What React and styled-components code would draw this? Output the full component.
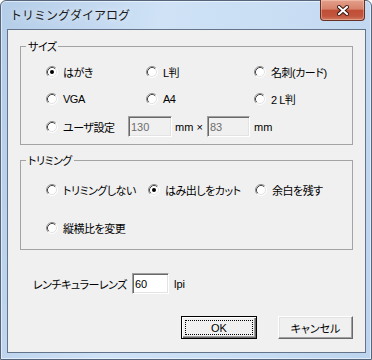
import React from "react";
import styled, { createGlobalStyle } from "styled-components";

const GlobalStyle = createGlobalStyle`
  html, body {
    margin: 0;
    padding: 0;
    background: #ffffff;
  }
  body {
    width: 372px;
    height: 360px;
    overflow: hidden;
    font-family: "Liberation Sans", "Noto Sans CJK JP", sans-serif;
    font-size: 11px;
    color: #000;
  }
`;

const Window = styled.div`
  box-sizing: border-box;
  width: 372px;
  height: 360px;
  display: flex;
  flex-direction: column;
  padding: 0 5px 6px 6px;
  border: 1px solid #55667c;
  border-radius: 6px 6px 0 0;
  background: linear-gradient(100deg, #b4cde8 0%, #cfe2f6 38%, #c8ddf3 70%, #bcd4ee 100%);
  box-shadow: inset 0 0 0 1px rgba(255, 255, 255, 0.55);
`;

const TitleBar = styled.div`
  height: 28px;
  display: flex;
  justify-content: space-between;
  align-items: flex-start;
  flex-shrink: 0;
`;

const Title = styled.div`
  margin: 6px 0 0 3px;
  line-height: 16px;
  font-family: "Noto Sans CJK JP", sans-serif;
  font-size: 12px;
  color: #1a1a1a;
  text-shadow: 0 0 6px rgba(255, 255, 255, 0.9);
`;

const CloseButton = styled.div`
  box-sizing: border-box;
  width: 45px;
  height: 21px;
  margin: -1px 1px 0 0;
  display: flex;
  align-items: center;
  justify-content: center;
  border: 1px solid #6a2f24;
  border-top: none;
  border-radius: 0 0 4px 4px;
  background: linear-gradient(#e3a08b 0%, #d7826b 45%, #c04e37 52%, #c3553d 80%, #d07a62 100%);
  box-shadow: inset 0 0 0 1px rgba(255, 220, 200, 0.4);
`;

const Client = styled.div`
  flex: 1;
  display: flex;
  flex-direction: column;
  background: #f0f0f0;
  border: 1px solid #62738a;
`;

const Group = styled.fieldset`
  margin: ${(p) => p.$top}px 12px 0 12px;
  padding: ${(p) => p.$padTop}px 0 ${(p) => p.$padBottom}px 0;
  border: 1px solid #a3a3a3;
  min-width: 0;
`;

const Legend = styled.legend`
  margin-left: 5px;
  padding: 0 2px;
  line-height: 15px;
  font-family: "Noto Sans CJK JP", sans-serif;
  font-size: 11px;
  font-feature-settings: "palt";
  letter-spacing: -0.5px;
`;

const Options = styled.div`
  display: grid;
  grid-template-columns: ${(p) => p.$cols};
  grid-auto-rows: 20px;
  row-gap: ${(p) => p.$gap}px;
  padding-left: 25px;
`;

const Option = styled.label`
  display: flex;
  align-items: center;
  gap: 5px;
  height: 20px;
  white-space: nowrap;
  flex-shrink: 0;
  width: ${(p) => (p.$width ? `${p.$width}px` : "auto")};
  font-feature-settings: "palt";
  letter-spacing: -0.5px;
`;

const CustomRow = styled.div`
  grid-column: 1 / -1;
  display: flex;
  align-items: center;
  height: 21px;
`;

const Field = styled.input`
  box-sizing: border-box;
  width: ${(p) => p.$width}px;
  height: 21px;
  margin: 0;
  padding: 0 2px;
  font-family: "Liberation Sans", sans-serif;
  font-size: 11px;
  color: ${(p) => (p.$muted ? "#6d6d6d" : "#000")};
  background: ${(p) => (p.$muted ? "#f0f0f0" : "#ffffff")};
  border-top: 1px solid #a0a0a0;
  border-left: 1px solid #a0a0a0;
  border-right: 1px solid #ffffff;
  border-bottom: 1px solid #ffffff;
  box-shadow: inset 1px 1px 0 #696969, inset -1px -1px 0 #e3e3e3;
  outline: none;
`;

const Unit = styled.span`
  margin-left: ${(p) => p.$gap}px;
  width: ${(p) => (p.$width ? `${p.$width}px` : "auto")};
  white-space: nowrap;
`;

const LensRow = styled.div`
  display: flex;
  align-items: center;
  margin-top: 23px;
  padding-left: 25px;
  height: 21px;
`;

const LensLabel = styled.span`
  width: 99px;
  white-space: nowrap;
  font-family: "Noto Sans CJK JP", sans-serif;
  font-feature-settings: "palt";
  letter-spacing: -0.5px;
`;

const ButtonRow = styled.div`
  display: flex;
  justify-content: flex-end;
  gap: 21px;
  margin: 22px 12px 0 0;
`;

const Button = styled.button`
  box-sizing: border-box;
  width: ${(p) => p.$width}px;
  height: 23px;
  padding: 0;
  font-family: "Liberation Sans", "Noto Sans CJK JP", sans-serif;
  font-size: 11px;
  font-feature-settings: "palt";
  color: #000;
  background: #f0f0f0;
  border: 1px solid;
  border-color: ${(p) => (p.$default ? "#000" : "#ffffff #696969 #696969 #ffffff")};
  box-shadow: ${(p) =>
    p.$default
      ? "inset 1px 1px 0 #ffffff, inset -1px -1px 0 #696969, inset -2px -2px 0 #a0a0a0"
      : "inset -1px -1px 0 #a0a0a0, inset 1px 1px 0 #e3e3e3"};
  outline: ${(p) => (p.$default ? "1px dotted #000" : "none")};
  outline-offset: -5px;
`;

const RadioIcon = ({ checked }) => (
  <svg width="12" height="12" viewBox="0 0 12 12">
    <circle cx="6" cy="6" r="5" fill="#ffffff" />
    <path d="M2.11 9.89 A5.5 5.5 0 0 1 9.89 2.11" fill="none" stroke="#8e8e8e" />
    <path d="M9.89 2.11 A5.5 5.5 0 0 1 2.11 9.89" fill="none" stroke="#ffffff" />
    <path d="M2.82 9.18 A4.5 4.5 0 0 1 9.18 2.82" fill="none" stroke="#474747" />
    <path d="M9.18 2.82 A4.5 4.5 0 0 1 2.82 9.18" fill="none" stroke="#e3e3e3" />
    {checked && <circle cx="6" cy="6" r="2" fill="#000" />}
  </svg>
);

const Radio = ({ label, checked, width }) => (
  <Option $width={width}>
    <RadioIcon checked={checked} />
    <span>{label}</span>
  </Option>
);

const CloseIcon = () => (
  <svg width="12" height="11" viewBox="0 0 12 11">
    <path d="M2 2 L10 9 M10 2 L2 9" stroke="#3b1610" strokeWidth="4" strokeLinecap="square" />
    <path d="M2 2 L10 9 M10 2 L2 9" stroke="#ffffff" strokeWidth="2" strokeLinecap="square" />
  </svg>
);

const sizes = [
  { label: "はがき", checked: true },
  { label: "L判" },
  { label: "名刺(カード)" },
  { label: "VGA" },
  { label: "A4" },
  { label: "2 L判" },
];

const trims = [
  { label: "トリミングしない" },
  { label: "はみ出しをカット", checked: true },
  { label: "余白を残す" },
  { label: "縦横比を変更" },
];

export default function App() {
  return (
    <>
      <GlobalStyle />
      <Window>
        <TitleBar>
          <Title>トリミングダイアログ</Title>
          <CloseButton>
            <CloseIcon />
          </CloseButton>
        </TitleBar>
        <Client>
          <Group $top={9} $padTop={8} $padBottom={8}>
            <Legend>サイズ</Legend>
            <Options $cols="100px 108px 1fr" $gap={7}>
              {sizes.map((s) => (
                <Radio key={s.label} label={s.label} checked={s.checked} />
              ))}
              <CustomRow>
                <Radio label="ユーザ設定" width={82} />
                <Field $width={44} $muted readOnly value="130" />
                <Unit $gap={3} $width={32}>mm ×</Unit>
                <Field $width={43} $muted readOnly value="83" />
                <Unit $gap={4}>mm</Unit>
              </CustomRow>
            </Options>
          </Group>

          <Group $top={8} $padTop={12} $padBottom={11}>
            <Legend>トリミング</Legend>
            <Options $cols="102px 107px 1fr" $gap={18}>
              {trims.map((t) => (
                <Radio key={t.label} label={t.label} checked={t.checked} />
              ))}
            </Options>
          </Group>

          <LensRow>
            <LensLabel>レンチキュラーレンズ</LensLabel>
            <Field $width={37} readOnly value="60" />
            <Unit $gap={5}>lpi</Unit>
          </LensRow>

          <ButtonRow>
            <Button $width={76} $default>OK</Button>
            <Button $width={75}>キャンセル</Button>
          </ButtonRow>
        </Client>
      </Window>
    </>
  );
}
